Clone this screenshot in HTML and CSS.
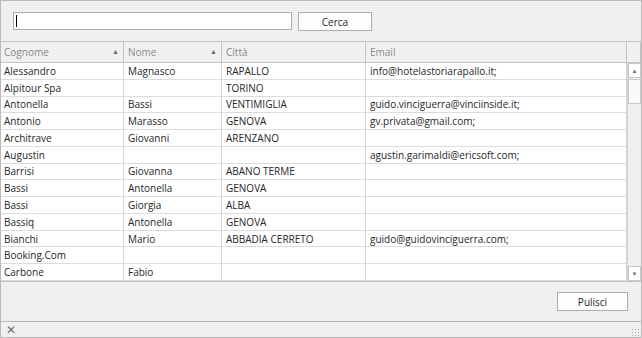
FILE: index.html
```html
<!DOCTYPE html>
<html>

<head>
    <meta charset="utf-8">
    <title>Rubrica</title>
    <link rel="stylesheet" href="styles.css">
</head>

<body>
    <div class="window">
        <div class="toolbar">
            <div class="search"><span class="caret"></span></div>
            <button class="button search-button">Cerca</button>
        </div>

        <div class="grid">
            <div class="row header">
                <div class="cell c1">Cognome<span class="sort">&#9650;</span></div>
                <div class="cell c2">Nome<span class="sort">&#9650;</span></div>
                <div class="cell c3">Città</div>
                <div class="cell c4">Email</div>
                <div class="cell c5"></div>
            </div>
            <div class="body">
                <div class="rows">
                    <div class="row"><div class="cell c1">Alessandro</div><div class="cell c2">Magnasco</div><div class="cell c3">RAPALLO</div><div class="cell c4">info@hotelastoriarapallo.it;</div></div>
                    <div class="row"><div class="cell c1">Alpitour Spa</div><div class="cell c2"></div><div class="cell c3">TORINO</div><div class="cell c4"></div></div>
                    <div class="row"><div class="cell c1">Antonella</div><div class="cell c2">Bassi</div><div class="cell c3">VENTIMIGLIA</div><div class="cell c4">guido.vinciguerra@vinciinside.it;</div></div>
                    <div class="row"><div class="cell c1">Antonio</div><div class="cell c2">Marasso</div><div class="cell c3">GENOVA</div><div class="cell c4">gv.privata@gmail.com;</div></div>
                    <div class="row"><div class="cell c1">Architrave</div><div class="cell c2">Giovanni</div><div class="cell c3">ARENZANO</div><div class="cell c4"></div></div>
                    <div class="row"><div class="cell c1">Augustin</div><div class="cell c2"></div><div class="cell c3"></div><div class="cell c4">agustin.garimaldi@ericsoft.com;</div></div>
                    <div class="row"><div class="cell c1">Barrisi</div><div class="cell c2">Giovanna</div><div class="cell c3">ABANO TERME</div><div class="cell c4"></div></div>
                    <div class="row"><div class="cell c1">Bassi</div><div class="cell c2">Antonella</div><div class="cell c3">GENOVA</div><div class="cell c4"></div></div>
                    <div class="row"><div class="cell c1">Bassi</div><div class="cell c2">Giorgia</div><div class="cell c3">ALBA</div><div class="cell c4"></div></div>
                    <div class="row"><div class="cell c1">Bassiq</div><div class="cell c2">Antonella</div><div class="cell c3">GENOVA</div><div class="cell c4"></div></div>
                    <div class="row"><div class="cell c1">Bianchi</div><div class="cell c2">Mario</div><div class="cell c3">ABBADIA CERRETO</div><div class="cell c4">guido@guidovinciguerra.com;</div></div>
                    <div class="row"><div class="cell c1">Booking.Com</div><div class="cell c2"></div><div class="cell c3"></div><div class="cell c4"></div></div>
                    <div class="row"><div class="cell c1">Carbone</div><div class="cell c2">Fabio</div><div class="cell c3"></div><div class="cell c4"></div></div>
                </div>
                <div class="scrollbar">
                    <div class="arrow">&#9650;</div>
                    <div class="track"><div class="thumb"></div></div>
                    <div class="arrow">&#9660;</div>
                </div>
            </div>
        </div>

        <div class="footer">
            <button class="button">Pulisci</button>
        </div>

        <div class="status">
            <span class="close">&#10005;</span>
            <span class="grip"></span>
        </div>
    </div>
</body>

</html>
```

FILE: styles.css
```css
body {
    margin: 0;
    padding: 0;
    background: #f0f0f0;
    font-family: "Open Sans", "Noto Sans", sans-serif;
    font-size: 10px;
    color: #262626;
}

.window {
    width: 642px;
    height: 338px;
    box-sizing: border-box;
    border: 1px solid #b9b9b9;
    display: flex;
    flex-direction: column;
    background: #f0f0f0;
}

.window > div {
    flex-shrink: 0;
}

.toolbar {
    height: 40px;
    display: flex;
    align-items: flex-start;
    padding: 11px 0 0 12px;
    box-sizing: border-box;
}

.search {
    width: 279px;
    height: 18px;
    box-sizing: border-box;
    background: #fff;
    border: 1px solid #acacac;
    padding: 2px 0 0 2px;
}

.caret {
    display: block;
    width: 1px;
    height: 12px;
    background: #000;
}

.button {
    font-family: inherit;
    font-size: 10px;
    color: #262626;
    background: #fdfdfd;
    border: 1px solid #adadad;
    height: 19px;
    padding: 0;
    box-sizing: border-box;
}

.search-button {
    width: 74px;
    margin-left: 6px;
}

.grid {
    height: 241px;
    box-sizing: border-box;
    border-top: 1px solid #c4c4c4;
    border-bottom: 1px solid #c4c4c4;
}

.row {
    display: flex;
    height: 16.77px;
    box-sizing: border-box;
    border-bottom: 1px solid #dcdcdc;
    background: #fff;
}

.header {
    height: 21px;
    background: #f0f0f0;
    border-bottom: 1px solid #c4c4c4;
    color: #8a8a8a;
}

.cell {
    box-sizing: border-box;
    border-right: 1px solid #d6d6d6;
    padding-left: 4px;
    display: flex;
    align-items: center;
    white-space: nowrap;
    overflow: hidden;
}

.header .cell {
    border-right: 1px solid #c4c4c4;
    padding-bottom: 1px;
}

.c1 { width: 123px; padding-left: 3px; }
.c2 { width: 98px; }
.c3 { width: 144px; }
.c4 { width: 261px; }
.c5 { flex: 1; border-right: none; }

.sort {
    margin-left: auto;
    margin-right: 4px;
    font-size: 7px;
    color: #6a6a6a;
}

.body {
    display: flex;
    height: 218px;
}

.rows {
    width: 626px;
}

.scrollbar {
    flex: 1;
    display: flex;
    flex-direction: column;
    background: #f0f0f0;
    border-left: 1px solid #d0d0d0;
}

.arrow {
    height: 15px;
    box-sizing: border-box;
    background: #fff;
    border: 1px solid #c9c9c9;
    font-size: 6px;
    color: #6a6a6a;
    display: flex;
    align-items: center;
    justify-content: center;
}

.track {
    flex: 1;
    padding-top: 1px;
}

.thumb {
    height: 25px;
    box-sizing: border-box;
    background: #fafafa;
    border: 1px solid #c9c9c9;
}

.footer {
    height: 39px;
    display: flex;
    justify-content: flex-end;
    align-items: flex-start;
    padding: 10px 13px 0 0;
    box-sizing: border-box;
}

.footer .button {
    width: 71px;
}

.status {
    height: 16px;
    box-sizing: border-box;
    border-top: 1px solid #b9b9b9;
    display: flex;
    align-items: center;
    justify-content: space-between;
    padding: 0 2px 0 5px;
}

.close {
    font-size: 12px;
    line-height: 12px;
    color: #6c6c6c;
}

.grip {
    width: 8px;
    height: 8px;
    align-self: flex-end;
    margin-bottom: 1px;
    background-image: radial-gradient(circle, #a8a8a8 0.8px, transparent 1px);
    background-size: 3px 3px;
}
```
